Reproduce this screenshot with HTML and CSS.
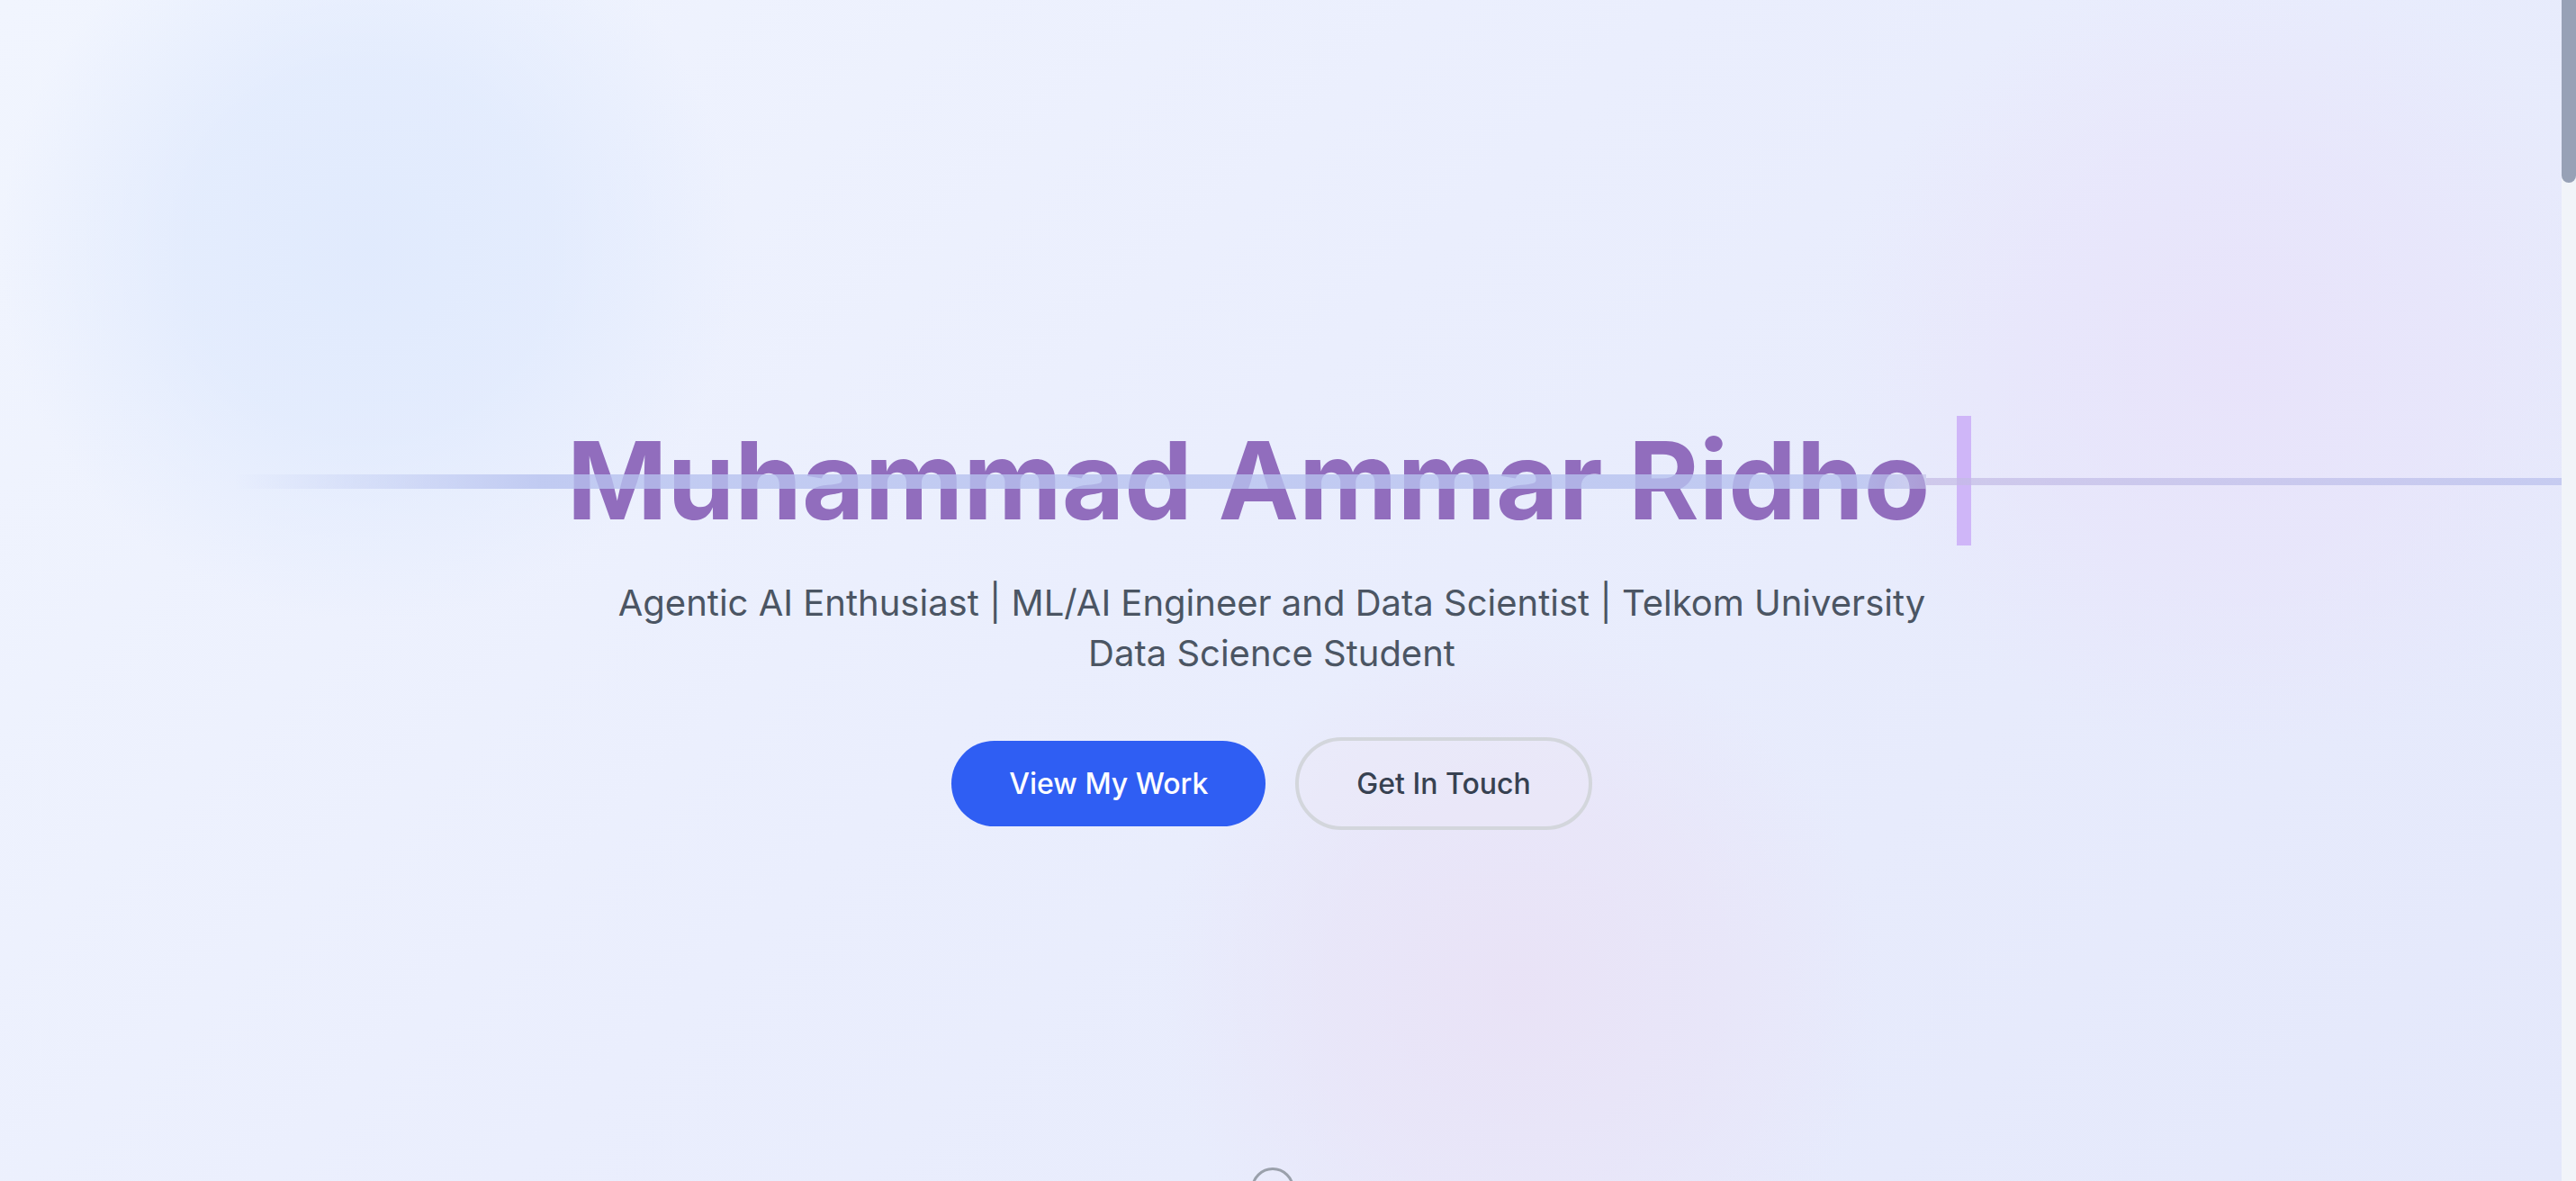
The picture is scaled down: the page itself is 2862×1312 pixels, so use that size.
FILE: index.html
```html
<!DOCTYPE html>
<html lang="en">
<head>
<meta charset="utf-8">
<title>Muhammad Ammar Ridho</title>
<link rel="stylesheet" href="styles.css">
</head>
<body>
<div class="page">
  <section class="hero">
    <div class="blob blob-blue"></div>
    <div class="blob blob-pink"></div>
    <div class="blob blob-violet"></div>
    <div class="content">
      <h1 class="title"><span class="name">Muhammad Ammar Ridho</span><span class="cursor"></span></h1>
      <p class="subtitle">Agentic AI Enthusiast | ML/AI Engineer and Data Scientist | Telkom University Data Science Student</p>
      <div class="actions">
        <a class="btn btn-primary" href="#projects">View My Work</a>
        <a class="btn btn-outline" href="#contact">Get In Touch</a>
      </div>
    </div>
    <div class="scan scan-thick"></div>
    <div class="scan scan-thin"></div>
    <div class="scroll-hint"></div>
  </section>
  <section class="rest" id="projects"></section>
</div>
<div class="fake-scrollbar"><div class="fake-thumb"></div></div>
</body>
</html>
```
FILE: styles.css
```css
html, body {
  margin: 0;
  padding: 0;
}
body {
  font-family: Inter, "Noto Sans", "Liberation Sans", sans-serif;
  background: #e6eafb;
}
.page {
  margin-right: 16px;
}
.fake-scrollbar {
  position: fixed;
  top: 0;
  right: 0;
  width: 16px;
  height: 100vh;
  background: #f1f4f9;
  z-index: 10;
}
.fake-thumb {
  width: 16px;
  height: 203px;
  background: #97a1b6;
  border-radius: 0 0 8px 8px;
}
.hero {
  position: relative;
  height: 1312px;
  overflow: hidden;
  background: linear-gradient(135deg, #f1f5fe 0%, #eaeefd 45%, #e4e8fb 100%);
}
.blob {
  position: absolute;
  border-radius: 50%;
  pointer-events: none;
}
.blob-blue {
  left: 0px;
  top: -130px;
  width: 820px;
  height: 820px;
  background: radial-gradient(closest-side, rgba(224, 234, 253, 0.95), rgba(224, 234, 253, 0.75) 50%, rgba(226, 235, 253, 0) 100%);
}
.blob-pink {
  left: 2040px;
  top: -40px;
  width: 900px;
  height: 880px;
  background: radial-gradient(closest-side, rgba(232, 226, 250, 0.9), rgba(232, 226, 250, 0.5) 55%, rgba(232, 226, 250, 0) 100%);
}
.blob-violet {
  left: 1290px;
  top: 700px;
  width: 800px;
  height: 800px;
  background: radial-gradient(closest-side, rgba(233, 226, 246, 0.95), rgba(233, 226, 246, 0.55) 55%, rgba(233, 226, 246, 0) 100%);
}
.content {
  position: relative;
  z-index: 1;
  display: flex;
  flex-direction: column;
  align-items: center;
  padding: 462px 20px 0 0;
}
.title {
  margin: 0 6px 0 0;
  font-size: 120px;
  line-height: 144px;
  font-weight: 700;
  color: #916dbd;
  white-space: nowrap;
  display: flex;
  align-items: flex-start;
}
.cursor {
  display: inline-block;
  width: 16px;
  height: 144px;
  margin-left: 30px;
  background: #cfb6f8;
}
.subtitle {
  margin: 36px 0 0;
  max-width: 1500px;
  text-align: center;
  font-size: 40px;
  line-height: 56px;
  color: #4b5563;
}
.actions {
  margin-top: 65px;
  display: flex;
  align-items: center;
  gap: 33px;
}
.btn {
  display: inline-block;
  text-decoration: none;
  font-size: 32px;
  line-height: 51px;
  font-weight: 500;
  padding: 22px 64px;
  border-radius: 999px;
}
.btn-primary {
  background: #2f5ef3;
  color: #ffffff;
}
.btn-outline {
  border: 4px solid #d3d6dc;
  color: #374151;
  background: rgba(236, 232, 248, 0.4);
}
.scan {
  position: absolute;
  z-index: 2;
  pointer-events: none;
}
.scan-thick {
  left: 260px;
  width: 1880px;
  top: 527px;
  height: 16px;
  background: linear-gradient(90deg, rgba(183, 194, 239, 0) 0%, rgba(183, 194, 239, 0.8) 18%, rgba(183, 194, 239, 0.8) 96%, rgba(190, 188, 230, 0.6) 100%);
}
.scan-thin {
  left: 2140px;
  right: 0;
  top: 531px;
  height: 8px;
  background: linear-gradient(90deg, rgba(196, 186, 228, 0.7), rgba(190, 196, 238, 0.8));
}
.scroll-hint {
  position: absolute;
  left: 1390px;
  top: 1297px;
  width: 42px;
  height: 42px;
  border: 3px solid #9aa0ab;
  border-radius: 50%;
}
.rest {
  height: 7168px;
  background: #eef1fc;
}
```
